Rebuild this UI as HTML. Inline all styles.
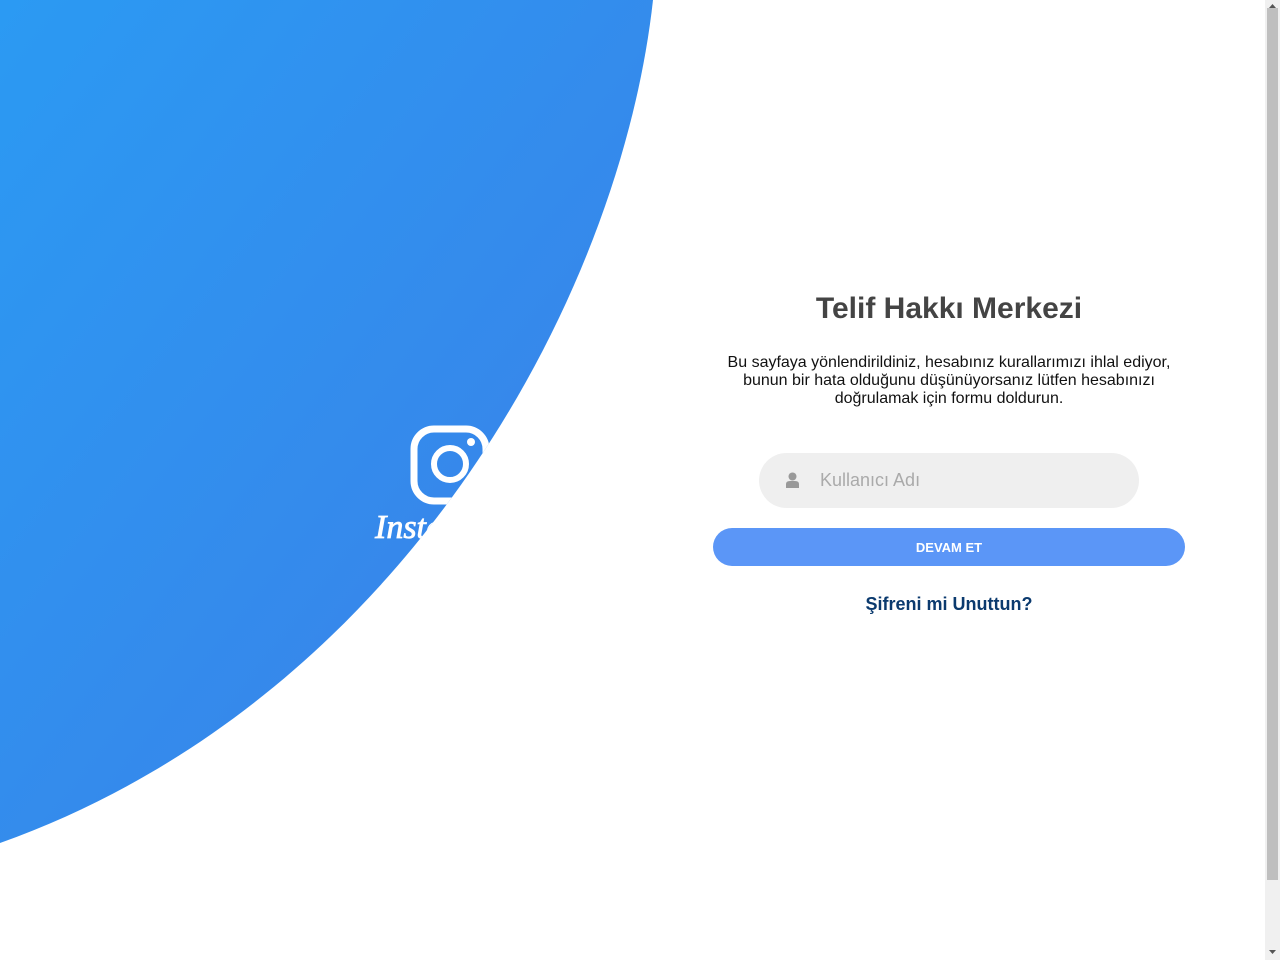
<!DOCTYPE html>
<html><head><meta charset="utf-8"><style>
html,body{margin:0;padding:0;width:1280px;height:960px;overflow:hidden;background:#fff;font-family:"Liberation Sans",Arial,sans-serif}
#bg{position:absolute;left:0;top:0}
.h1{position:absolute;left:713px;width:472px;top:292px;text-align:center;font-size:30px;font-weight:bold;color:#444}
.p{position:absolute;left:713px;width:472px;top:354px;text-align:center;font-size:16px;line-height:18px;color:#111}
.inp{position:absolute;left:759px;top:453px;width:380px;height:55px;border-radius:28px;background:#efefef}
.inp span{position:absolute;left:61px;top:17px;font-size:18px;color:#aaa}
.btn{position:absolute;left:713px;top:528px;width:472px;height:38px;border-radius:19px;background:#5b96f7;color:#fff;font-size:13px;font-weight:bold;text-align:center;line-height:39px}
.f{position:absolute;left:713px;width:472px;top:594px;text-align:center;font-size:18px;font-weight:bold;color:#0b3a6e}
.sb{position:absolute;left:1265px;top:0;width:15px;height:960px;background:#f0f0f0}
.th{position:absolute;left:1267px;top:8px;width:11px;height:872px;background:#bfbfbf}
</style></head><body>
<svg id="bg" width="1265" height="960">
<defs>
<linearGradient id="g" x1="0" y1="0" x2="1" y2="1"><stop offset="0" stop-color="#2b9af3"/><stop offset="1" stop-color="#3c7ee6"/></linearGradient>
<clipPath id="c"><path d="M0,0 L653,0 C620,300 400,700 0,843 Z"/></clipPath>
</defs>
<path d="M0,0 L653,0 C620,300 400,700 0,843 Z" fill="url(#g)"/>
<g clip-path="url(#c)" fill="none" stroke="#fff">
<rect x="414" y="429" width="72" height="72" rx="20" stroke-width="7"/>
<circle cx="450" cy="464" r="16" stroke-width="6"/>
<circle cx="471" cy="442" r="4" fill="#fff" stroke="none"/>
<text x="375" y="538" font-family="Liberation Serif,serif" font-style="italic" font-size="34" fill="#fff" stroke="#fff" stroke-width="0.8">Instagram</text>
</g>
</svg>
<div class="h1">Telif Hakkı Merkezi</div>
<div class="p">Bu sayfaya yönlendirildiniz, hesabınız kurallarımızı ihlal ediyor, bunun bir hata olduğunu düşünüyorsanız lütfen hesabınızı doğrulamak için formu doldurun.</div>
<div class="inp"><svg style="position:absolute;left:27px;top:19px" width="13" height="16"><circle cx="6.5" cy="4.5" r="4" fill="#999"/><path d="M0,16 L0,12 Q0,9 4,9 L9,9 Q13,9 13,12 L13,16Z" fill="#999"/></svg><span>Kullanıcı Adı</span></div>
<div class="btn">DEVAM ET</div>
<div class="f">Şifreni mi Unuttun?</div>
<div class="sb"></div><div class="th"></div>
<svg style="position:absolute;left:1265px;top:0" width="15" height="960"><path d="M4,8 L7.5,4 L11,8Z" fill="#555"/><path d="M4,950 L7.5,954 L11,950Z" fill="#555"/></svg>
</body></html>
